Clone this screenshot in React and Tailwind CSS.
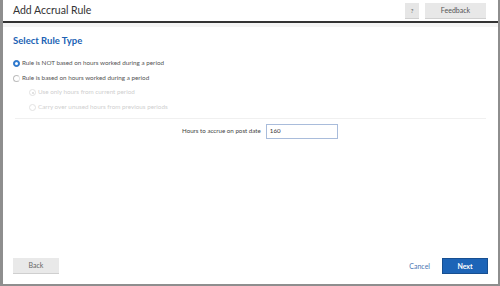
import React from 'react';

const OPTIONS = [
  { id: 'not', label: 'Rule is NOT based on hours worked during a period', checked: true, indent: false, disabled: false },
  { id: 'based', label: 'Rule is based on hours worked during a period', checked: false, indent: false, disabled: false },
  { id: 'current', label: 'Use only hours from current period', checked: true, indent: true, disabled: true },
  { id: 'carry', label: 'Carry over unused hours from previous periods', checked: false, indent: true, disabled: true },
];

function Radio({ checked, disabled }) {
  if (disabled) {
    return (
      <span className="w-[7px] h-[7px] rounded-full border border-[#e2e2e2] bg-white flex items-center justify-center">
        {checked && <span className="w-[2px] h-[2px] rounded-full bg-[#d8d8d8]" />}
      </span>
    );
  }
  if (checked) {
    return (
      <span className="w-[7px] h-[7px] rounded-full bg-[#2f7fd8] border border-[#2a6fc0] flex items-center justify-center">
        <span className="w-[3px] h-[3px] rounded-full bg-white" />
      </span>
    );
  }
  return <span className="w-[7px] h-[7px] rounded-full border border-[#bdbdbd] border-r-[#e5e5e5] bg-white" />;
}

export default function App() {
  return (
    <div className="w-[500px] h-[286px] bg-white border-l-[3px] border-r-2 border-b-2 border-[#8e8e8e] flex flex-col overflow-hidden" style={{ fontFamily: 'Lato, "Open Sans", sans-serif' }}>
      <div className="h-[23px] flex items-center justify-between pl-[10px] pr-[12px] border-b-2 border-[#333]">
        <span className="text-[10.5px] text-[#333]">Add Accrual Rule</span>
        <div className="flex items-center gap-[6px]">
          <button className="w-[14px] h-[16px] bg-[#e6e6e6] border-b border-[#cfcfcf] text-[6px] text-[#555] flex items-center justify-center">?</button>
          <button className="w-[61px] h-[16px] bg-[#e8e8e8] border-b border-[#d0d0d0] text-[7px] text-[#555]">Feedback</button>
        </div>
      </div>
      <div className="h-[4px] bg-[#f4f4f4]" />

      <div className="flex-1 flex flex-col px-[10px]">
        <h2 className="text-[9.5px] font-bold text-[#2062b4] mt-[7px] leading-[13px]">Select Rule Type</h2>

        <div className="flex flex-col mt-[13px] gap-[7.5px]">
          {OPTIONS.map((o) => (
            <div key={o.id} className={`flex items-center gap-[2px] h-[7px] ${o.indent ? 'pl-[16px]' : ''}`}>
              <Radio checked={o.checked} disabled={o.disabled} />
              <span className={`text-[6.3px] leading-none ${o.disabled ? 'text-[#cfcfcf]' : 'text-[#555]'}`}>{o.label}</span>
            </div>
          ))}
        </div>

        <div className="h-px bg-[#f0f0f0] mt-[7px] mx-[2px]" />

        <div className="flex items-center gap-[5px] mt-[5px] pl-[169px]">
          <span className="text-[6.2px] text-[#444]">Hours to accrue on post date</span>
          <div className="w-[72px] h-[15px] border border-[#a9bcdb] flex items-center px-[3px] text-[6.2px] text-[#333]">160</div>
        </div>

        <div className="flex-1" />

        <div className="flex items-center justify-between mb-[10px]">
          <button className="w-[46px] h-[16px] bg-[#e9e9e9] border-b border-[#cfcfcf] text-[7px] text-[#666]">Back</button>
          <div className="flex items-center gap-[12px]">
            <span className="text-[7px] text-[#4a76b3]">Cancel</span>
            <button className="w-[46px] h-[16px] bg-[#1d64b7] border border-[#174f91] text-[7px] font-bold text-white">Next</button>
          </div>
        </div>
      </div>
    </div>
  );
}
